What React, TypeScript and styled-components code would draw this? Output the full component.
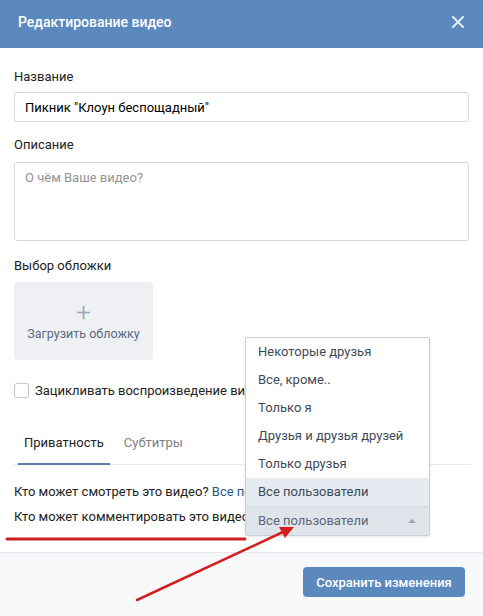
import React from "react";
import styled, { createGlobalStyle } from "styled-components";

const GlobalStyle = createGlobalStyle`
    html, body {
        margin: 0;
        padding: 0;
        background: #ffffff;
    }
    body {
        font-family: Roboto, "Open Sans", "Liberation Sans", sans-serif;
        font-size: 13px;
        color: #222222;
    }
`;

const privacyOptions = ["Некоторые друзья", "Все, кроме..", "Только я", "Друзья и друзья друзей", "Только друзья", "Все пользователи"];

export default function App() {
    return (
        <>
            <GlobalStyle />
            <Modal>
                <Header>
                    <HeaderTitle>Редактирование видео</HeaderTitle>
                    <CloseButton aria-label="Закрыть">
                        <svg width="12" height="12" viewBox="0 0 12 12">
                            <path d="M1 1L11 11M11 1L1 11" stroke="#e6edf5" strokeWidth="2" strokeLinecap="round" />
                        </svg>
                    </CloseButton>
                </Header>

                <Body>
                    <Label>Название</Label>
                    <TextInput defaultValue={'Пикник "Клоун беспощадный"'} />

                    <Label $top={15}>Описание</Label>
                    <TextArea placeholder="О чём Ваше видео?" />

                    <Label $top={17}>Выбор обложки</Label>
                    <CoverUpload>
                        <PlusSign>+</PlusSign>
                        <CoverText>Загрузить обложку</CoverText>
                    </CoverUpload>

                    <CheckRow>
                        <CheckBox />
                        <span>Зацикливать воспроизведение видео</span>
                    </CheckRow>

                    <Tabs>
                        <Tab $active>Приватность</Tab>
                        <Tab>Субтитры</Tab>
                    </Tabs>

                    <PrivacyRow $top={19}>
                        Кто может смотреть это видео? <Link>Все пользователи</Link>
                    </PrivacyRow>
                    <PrivacyRow $top={9}>
                        Кто может комментировать это видео? <Link>Все пользователи</Link>
                    </PrivacyRow>
                </Body>

                <Footer>
                    <SaveButton>Сохранить изменения</SaveButton>
                </Footer>

                <Dropdown>
                    {privacyOptions.map((option, index) => (
                        <DropdownItem key={option} $hover={index === privacyOptions.length - 1}>
                            {option}
                        </DropdownItem>
                    ))}
                    <DropdownCurrent>
                        Все пользователи
                        <UpTriangle />
                    </DropdownCurrent>
                </Dropdown>

                <Annotation width="483" height="616" viewBox="0 0 483 616">
                    <line x1="7" y1="539" x2="245" y2="539" stroke="#cc1f1f" strokeWidth="3" strokeLinecap="round" />
                    <line x1="137" y1="600" x2="283" y2="532" stroke="#d41f1f" strokeWidth="2.5" strokeLinecap="round" />
                    <polygon points="294,527 279,527 285,538" fill="#d41f1f" />
                </Annotation>
            </Modal>
        </>
    );
}

const Modal = styled.div`
    position: relative;
    width: 483px;
    height: 616px;
    display: flex;
    flex-direction: column;
    background: #ffffff;
    overflow: hidden;
`;

const Header = styled.div`
    height: 48px;
    flex-shrink: 0;
    display: flex;
    align-items: center;
    justify-content: space-between;
    padding: 0 18px;
    background: #5b88bd;
`;

const HeaderTitle = styled.div`
    color: #ffffff;
    font-size: 14px;
    font-weight: 500;
    margin-top: -4px;
`;

const CloseButton = styled.div`
    display: flex;
    margin-right: 1px;
    margin-top: -4px;
`;

const Body = styled.div`
    flex: 1;
    display: flex;
    flex-direction: column;
    padding: 21px 14px 0;
`;

const Label = styled.div<{ $top?: number }>`
    line-height: 16px;
    margin-top: ${props => props.$top ?? 0}px;
    margin-bottom: 7px;
    color: #222222;
`;

const TextInput = styled.input`
    height: 30px;
    box-sizing: border-box;
    border: 1px solid #d3d9de;
    border-radius: 3px;
    padding: 0 10px;
    font-family: inherit;
    font-size: 13px;
    color: #000000;
    outline: none;
`;

const TextArea = styled.textarea`
    height: 79px;
    box-sizing: border-box;
    border: 1px solid #d3d9de;
    border-radius: 3px;
    padding: 7px 10px;
    font-family: inherit;
    font-size: 13px;
    resize: none;
    outline: none;
    margin-top: 2px;

    &::placeholder {
        color: #939393;
    }
`;

const CoverUpload = styled.div`
    width: 139px;
    height: 78px;
    margin-top: 1px;
    border-radius: 4px;
    background: #eef0f3;
    display: flex;
    flex-direction: column;
    align-items: center;
    justify-content: center;
`;

const PlusSign = styled.div`
    font-size: 26px;
    font-weight: 300;
    line-height: 20px;
    color: #9aa5b3;
    margin-bottom: 4px;
`;

const CoverText = styled.div`
    font-size: 12.5px;
    color: #5a6a7c;
`;

const CheckRow = styled.div`
    display: flex;
    align-items: center;
    gap: 6px;
    margin-top: 23px;
    white-space: nowrap;
`;

const CheckBox = styled.div`
    width: 13px;
    height: 13px;
    border: 1px solid #c1c9d1;
    border-radius: 3px;
    flex-shrink: 0;
`;

const Tabs = styled.div`
    display: flex;
    margin-top: 30px;
    border-bottom: 1px solid #e7e8ec;
    padding-left: 4px;
    margin-right: -2px;
`;

const Tab = styled.div<{ $active?: boolean }>`
    padding: 7px 6px 13px;
    margin-right: 8px;
    margin-bottom: -1px;
    color: ${props => (props.$active ? "#222222" : "#828282")};
    border-bottom: 2px solid ${props => (props.$active ? "#5b7fa6" : "transparent")};
`;

const PrivacyRow = styled.div<{ $top: number }>`
    line-height: 16px;
    margin-top: ${props => props.$top}px;
    white-space: nowrap;
`;

const Link = styled.span`
    color: #2a5885;
`;

const Footer = styled.div`
    height: 49px;
    flex-shrink: 0;
    border-top: 1px solid #e7e8ec;
    background: #f7f8fa;
    display: flex;
    justify-content: flex-end;
    align-items: flex-start;
    padding: 14px 18px 0;
`;

const SaveButton = styled.button`
    width: 162px;
    height: 30px;
    border: none;
    border-radius: 4px;
    background: #5b88bd;
    color: #ffffff;
    font-family: inherit;
    font-size: 13px;
    font-weight: 500;
`;

const Dropdown = styled.div`
    position: absolute;
    left: 245px;
    top: 337px;
    width: 183px;
    background: #ffffff;
    border: 1px solid #c5d0db;
    border-radius: 2px;
    box-shadow: 0 1px 3px rgba(0, 0, 0, 0.1);
`;

const DropdownItem = styled.div<{ $hover?: boolean }>`
    height: 28px;
    line-height: 28px;
    padding-left: 12px;
    color: #3d4a57;
    white-space: nowrap;
    background: ${props => (props.$hover ? "#e5ebf1" : "transparent")};
`;

const DropdownCurrent = styled.div`
    position: relative;
    height: 28px;
    line-height: 28px;
    padding-left: 12px;
    color: #5a6878;
    background: #dfe4ea;
    border-top: 1px solid #d0d8e0;
`;

const UpTriangle = styled.span`
    position: absolute;
    right: 13px;
    top: 12px;
    width: 0;
    height: 0;
    border-left: 4px solid transparent;
    border-right: 4px solid transparent;
    border-bottom: 4px solid #98a5b4;
`;

const Annotation = styled.svg`
    position: absolute;
    left: 0;
    top: 0;
    pointer-events: none;
`;
